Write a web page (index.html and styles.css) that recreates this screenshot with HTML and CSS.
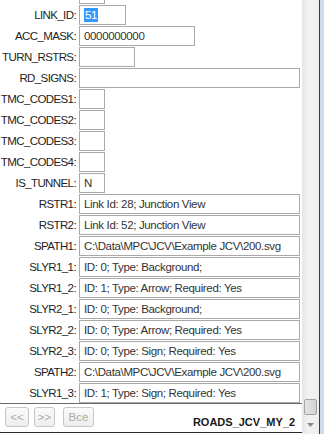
FILE: index.html
```html
<!DOCTYPE html>
<html lang="ru">
<head>
    <meta charset="UTF-8">
    <meta name="viewport" content="width=device-width, initial-scale=1.0">
    <title>ROADS_JCV_MY_2</title>
    <link rel="stylesheet" href="styles.css">
</head>
<body>
<div class="window">
    <div class="panel">
        <div class="fields">
            <div class="fields-inner">
                <!-- row cut off by the scroll position -->
                <div class="row"><span class="label"></span><span class="box w-xs"></span></div>
                <div class="row"><span class="label">LINK_ID:</span><span class="box w-link"><span class="selected">51</span></span></div>
                <div class="row"><span class="label">ACC_MASK:</span><span class="box w-acc">0000000000</span></div>
                <div class="row"><span class="label">TURN_RSTRS:</span><span class="box w-turn"></span></div>
                <div class="row"><span class="label">RD_SIGNS:</span><span class="box w-full"></span></div>
                <div class="row"><span class="label">TMC_CODES1:</span><span class="box w-xs"></span></div>
                <div class="row"><span class="label">TMC_CODES2:</span><span class="box w-xs"></span></div>
                <div class="row"><span class="label">TMC_CODES3:</span><span class="box w-xs"></span></div>
                <div class="row"><span class="label">TMC_CODES4:</span><span class="box w-xs"></span></div>
                <div class="row"><span class="label">IS_TUNNEL:</span><span class="box w-xs">N</span></div>
                <div class="row"><span class="label">RSTR1:</span><span class="box w-full">Link Id: 28; Junction View</span></div>
                <div class="row"><span class="label">RSTR2:</span><span class="box w-full">Link Id: 52; Junction View</span></div>
                <div class="row"><span class="label">SPATH1:</span><span class="box w-full">C:\Data\MPC\JCV\Example JCV\200.svg</span></div>
                <div class="row"><span class="label">SLYR1_1:</span><span class="box w-full">ID: 0; Type: Background;</span></div>
                <div class="row"><span class="label">SLYR1_2:</span><span class="box w-full">ID: 1; Type: Arrow; Required: Yes</span></div>
                <div class="row"><span class="label">SLYR2_1:</span><span class="box w-full">ID: 0; Type: Background;</span></div>
                <div class="row"><span class="label">SLYR2_2:</span><span class="box w-full">ID: 0; Type: Arrow; Required: Yes</span></div>
                <div class="row"><span class="label">SLYR2_3:</span><span class="box w-full">ID: 0; Type: Sign; Required: Yes</span></div>
                <div class="row"><span class="label">SPATH2:</span><span class="box w-full">C:\Data\MPC\JCV\Example JCV\200.svg</span></div>
                <div class="row"><span class="label">SLYR1_3:</span><span class="box w-full">ID: 1; Type: Sign; Required: Yes</span></div>
            </div>
        </div>
        <div class="footer">
            <div class="nav">
                <button class="nav-btn btn-prev" disabled>&lt;&lt;</button>
                <button class="nav-btn btn-next" disabled>&gt;&gt;</button>
                <button class="nav-btn btn-all" disabled>Все</button>
            </div>
            <div class="layer-name">ROADS_JCV_MY_2</div>
        </div>
    </div>
    <div class="scrollbar">
        <div class="thumb"></div>
        <div class="arrow">
            <svg width="7" height="4" viewBox="0 0 7 4"><path d="M0 0h7L3.5 4z" fill="#8a8a8a"/></svg>
        </div>
    </div>
    <div class="frame"></div>
</div>
</body>
</html>
```

FILE: styles.css
```css
/* Global */
body {
    margin: 0;
    padding: 0;
    width: 324px;
    height: 434px;
    overflow: hidden;
    background: #ffffff;
    font-family: 'Liberation Sans', Arial, sans-serif;
    font-size: 11px;
    color: #222;
}

.window {
    display: flex;
    height: 434px;
}

/* Left panel: fields + footer */
.panel {
    width: 302px;
    display: flex;
    flex-direction: column;
    background: #fff;
}

.fields {
    height: 403px;
    overflow: hidden;
}

.fields-inner {
    margin-top: -16px;
}

.row {
    display: flex;
    align-items: center;
    height: 20px;
    margin-bottom: 1px;
}

.label {
    width: 76px;
    margin-right: 3px;
    text-align: right;
    white-space: nowrap;
    font-size: 11.5px;
    letter-spacing: -0.6px;
    color: #1e1e1e;
}

.box {
    box-sizing: border-box;
    height: 20px;
    border: 1px solid #a9a9a9;
    padding: 0 4px;
    line-height: 18px;
    white-space: nowrap;
    overflow: hidden;
    color: #333;
    font-size: 11.5px;
    letter-spacing: -0.35px;
}

.w-xs { width: 26px; }
.w-link { width: 47px; }
.w-acc { width: 116px; }
.w-turn { width: 56px; }
.w-full { width: 221px; }

.selected {
    background: #3399ff;
    color: #fff;
    padding: 1px 1px;
}

/* Footer */
.footer {
    box-sizing: border-box;
    height: 30px;
    border-top: 1px solid #6a6a6a;
    border-bottom: 1px solid #2a2a2a;
    display: flex;
    justify-content: space-between;
    padding: 0 7px 0 5px;
}

.nav {
    display: flex;
    padding-top: 3px;
}

.nav-btn {
    box-sizing: border-box;
    height: 20px;
    padding: 0;
    border: 1px solid #c6c6c6;
    border-radius: 3px;
    background: linear-gradient(#fbfbfb, #ededed);
    color: #ababab;
    font-family: 'Liberation Sans', Arial, sans-serif;
    font-size: 11.5px;
}

.btn-prev { width: 24px; }
.btn-next { width: 21px; margin-left: 5px; }
.btn-all { width: 31px; margin-left: 8px; }

.layer-name {
    font-weight: bold;
    font-size: 11px;
    color: #1a1a1a;
    padding-top: 12px;
}

/* Vertical scrollbar */
.scrollbar {
    width: 17px;
    display: flex;
    flex-direction: column;
    justify-content: flex-end;
    background: linear-gradient(to right, #e6e6e6, #f2f2f2 40%, #eeeeee);
    border-right: 1px solid #3a3a3a;
}

.thumb {
    height: 16px;
    margin: 0 2px 1px 2px;
    border: 1px solid #a3a3a3;
    border-radius: 2px;
    box-sizing: border-box;
    background: linear-gradient(to right, #e4e4e4, #d2d2d2);
}

.arrow {
    height: 17px;
    display: flex;
    align-items: center;
    justify-content: center;
    margin-bottom: 1px;
}

.frame {
    width: 4px;
    background: #cddcec;
}
```
